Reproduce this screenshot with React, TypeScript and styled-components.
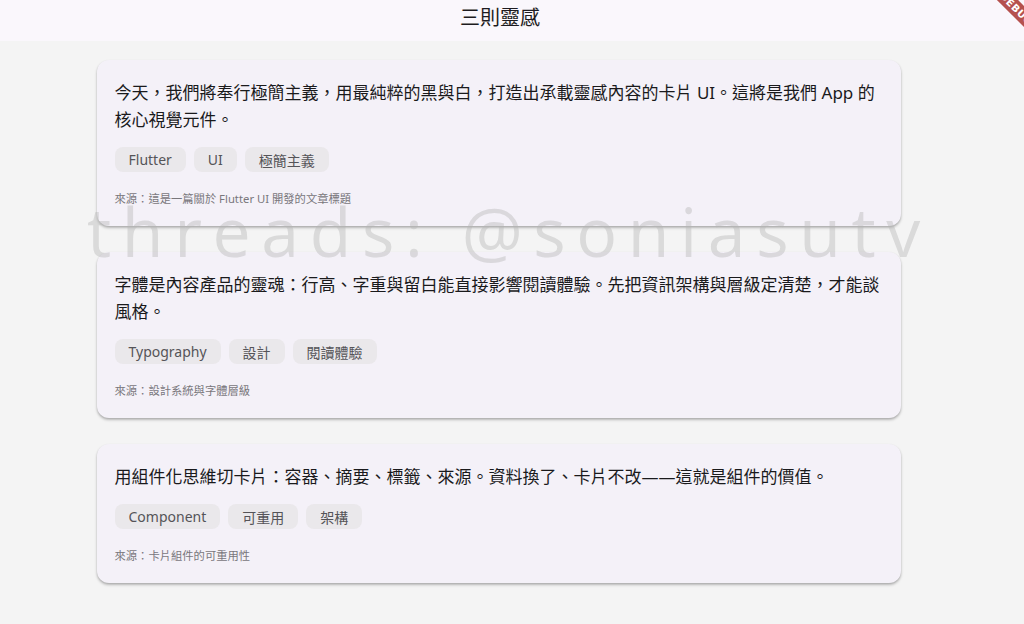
import React from "react";
import styled, { createGlobalStyle } from "styled-components";

const GlobalStyle = createGlobalStyle`
  html, body {
    margin: 0;
    padding: 0;
    background: #f4f4f4;
    font-family: "Noto Sans", "Noto Sans CJK TC", sans-serif;
    overflow: hidden;
  }
  * { box-sizing: border-box; }
`;

const Page = styled.div`
  position: relative;
  width: 1024px;
  height: 624px;
  background: #f4f4f4;
  overflow: hidden;
`;

const AppBar = styled.header`
  height: 41px;
  background: #faf7fc;
  display: flex;
  justify-content: center;
  align-items: flex-start;
  padding: 6px 24px 0 0;
`;

const Title = styled.h1`
  margin: 0;
  font-family: "Noto Sans CJK TC", sans-serif;
  font-size: 20px;
  line-height: 22px;
  font-weight: 400;
  color: #1d1b20;
`;

const Main = styled.main`
  display: flex;
  flex-direction: column;
  align-items: center;
  gap: 26px;
  padding: 19px 27px 0 0;
`;

const Card = styled.article`
  width: 804px;
  background: #f4f1f8;
  border-radius: 12px;
  padding: 19px 18px 19px;
  box-shadow: 0 2px 3px rgba(0, 0, 0, 0.22), 0 1px 2px rgba(0, 0, 0, 0.12);
`;

const Body = styled.p`
  margin: 0;
  font-size: 17px;
  line-height: 27px;
  color: #1a1a1c;
`;

const Tags = styled.div`
  display: flex;
  gap: 8px;
  margin-top: 14px;
`;

const Tag = styled.span`
  height: 25px;
  display: inline-flex;
  align-items: center;
  padding: 0 14px;
  border-radius: 8px;
  background: #eae8eb;
  color: #555458;
  font-size: 14px;
`;

const Source = styled.div`
  margin-top: 19px;
  font-size: 11.3px;
  line-height: 16px;
  color: #79777c;
`;

const Watermark = styled.div`
  position: absolute;
  left: 87px;
  top: 197px;
  font-family: "Open Sans", sans-serif;
  font-size: 68px;
  font-weight: 500;
  line-height: 68px;
  letter-spacing: 10.6px;
  color: rgba(180, 180, 180, 0.42);
  white-space: nowrap;
  pointer-events: none;
`;

const BannerClip = styled.div`
  position: absolute;
  top: 0;
  right: 0;
  width: 80px;
  height: 80px;
  overflow: hidden;
  pointer-events: none;
`;

const Ribbon = styled.div`
  position: absolute;
  left: 20px;
  top: 9px;
  width: 120px;
  height: 15px;
  background: #b5514e;
  transform: rotate(45deg);
  display: flex;
  align-items: center;
  justify-content: center;
  padding-right: 22px;
  color: #ffffff;
  font-family: "DejaVu Sans", sans-serif;
  font-weight: 700;
  font-size: 10px;
  letter-spacing: 0.5px;
`;

type Item = { text: React.ReactNode; tags: string[]; source: string };

const items: Item[] = [
  {
    text: (
      <>
        今天，我們將奉行極簡主義，用最純粹的黑與白，打造出承載靈感內容的卡片 UI。這將是我們 App 的
        <br />
        核心視覺元件。
      </>
    ),
    tags: ["Flutter", "UI", "極簡主義"],
    source: "來源：這是一篇關於 Flutter UI 開發的文章標題",
  },
  {
    text: "字體是內容產品的靈魂：行高、字重與留白能直接影響閱讀體驗。先把資訊架構與層級定清楚，才能談風格。",
    tags: ["Typography", "設計", "閱讀體驗"],
    source: "來源：設計系統與字體層級",
  },
  {
    text: "用組件化思維切卡片：容器、摘要、標籤、來源。資料換了、卡片不改——這就是組件的價值。",
    tags: ["Component", "可重用", "架構"],
    source: "來源：卡片組件的可重用性",
  },
];

export default function App() {
  return (
    <Page>
      <GlobalStyle />
      <AppBar>
        <Title>三則靈感</Title>
      </AppBar>
      <Main>
        {items.map((it, i) => (
          <Card key={i}>
            <Body>{it.text}</Body>
            <Tags>
              {it.tags.map((t) => (
                <Tag key={t}>{t}</Tag>
              ))}
            </Tags>
            <Source>{it.source}</Source>
          </Card>
        ))}
      </Main>
      <Watermark>threads: @soniasutv</Watermark>
      <BannerClip>
        <Ribbon>DEBUG</Ribbon>
      </BannerClip>
    </Page>
  );
}
